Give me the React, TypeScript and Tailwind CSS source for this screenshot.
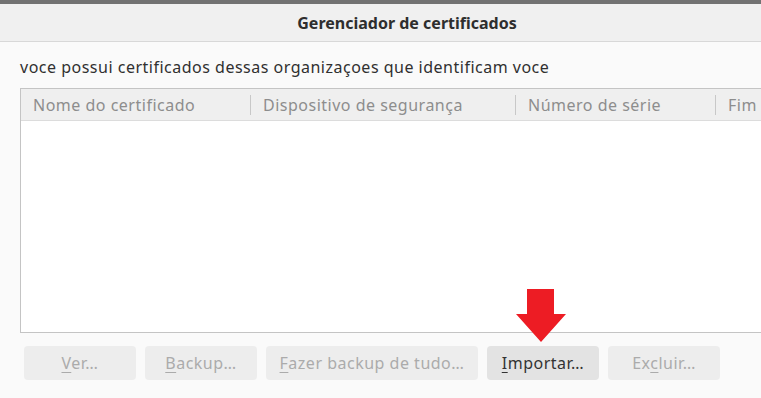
import React from 'react';

const font = { fontFamily: '"Noto Sans", "Open Sans", sans-serif' };

// buttons along the bottom; mn = index of the underlined mnemonic letter
const buttons = [
  { label: 'Ver…', mn: 0, w: 'w-[112px]', enabled: false },
  { label: 'Backup…', mn: 0, w: 'w-[112px]', enabled: false },
  { label: 'Fazer backup de tudo…', mn: 0, w: 'w-[212px]', enabled: false },
  { label: 'Importar…', mn: 0, w: 'w-[112px]', enabled: true },
  { label: 'Excluir…', mn: 2, w: 'w-[112px]', enabled: false },
];

const columns = [
  { name: 'Nome do certificado', w: 'w-[229px]' },
  { name: 'Dispositivo de segurança', w: 'w-[265px]' },
  { name: 'Número de série', w: 'w-[200px]' },
  { name: 'Fim', w: 'flex-1' },
];

function App() {
  return (
    <div className="w-[761px] h-[398px] overflow-hidden bg-[#fafafa] flex flex-col" style={font}>
      {/* strip of the window behind */}
      <div className="h-[4px] bg-[#727272] shrink-0" />

      {/* title bar */}
      <div className="h-[38px] shrink-0 bg-[#f0f0f0] border-b border-[#d8d8d8] flex items-center justify-center pl-[53px]">
        <span className="text-[16px] font-bold text-[#2e2e2e]">Gerenciador de certificados</span>
      </div>

      <div className="flex-1 pl-[20px] flex flex-col">
        <p className="mt-[15px] h-[20px] text-[16px] leading-[20px] tracking-[0.5px] text-[#303030] whitespace-nowrap">
          voce possui certificados dessas organizaçoes que identificam voce
        </p>

        {/* certificate list */}
        <div className="mt-[11px] h-[245px] bg-white border-l border-t border-b border-[#c4c4c4] flex flex-col">
          <div className="h-[32px] bg-[#efefef] border-b border-[#dcdcdc] flex items-center">
            {columns.map((c, i) => (
              <div key={c.name} className={`${c.w} h-full flex items-center`}>
                {i > 0 && <div className="w-px h-[20px] bg-[#c8c8c8] mr-[12px]" />}
                <span className={`${i === 0 ? 'pl-[12px]' : ''} text-[16px] tracking-[0.5px] text-[#8d8d8d] whitespace-nowrap`}>
                  {c.name}
                </span>
              </div>
            ))}
          </div>
          <div className="flex-1" />
        </div>

        {/* buttons */}
        <div className="relative mt-[13px] pl-[4px] flex gap-[9px]">
          {buttons.map((b) => (
            <div
              key={b.label}
              className={`${b.w} h-[34px] rounded-[4px] flex items-center justify-center text-[16px] tracking-[0.5px] whitespace-nowrap ${
                b.enabled ? 'bg-[#e3e3e3] text-[#333333]' : 'bg-[#ededed] text-[#ababab]'
              }`}
            >
              <span>
                {b.label.slice(0, b.mn)}
                <span className="underline underline-offset-[3px]">{b.label[b.mn]}</span>
                {b.label.slice(b.mn + 1)}
              </span>
            </div>
          ))}

          {/* red arrow pointing at Importar */}
          <svg className="absolute left-[496px] top-[-57px]" width="52" height="55" viewBox="0 0 52 55">
            <polygon points="11,0 38,0 38,25 50,25 25,53 0,25 11,25" fill="#ed1c24" />
          </svg>
        </div>
      </div>
    </div>
  );
}

export default App;
